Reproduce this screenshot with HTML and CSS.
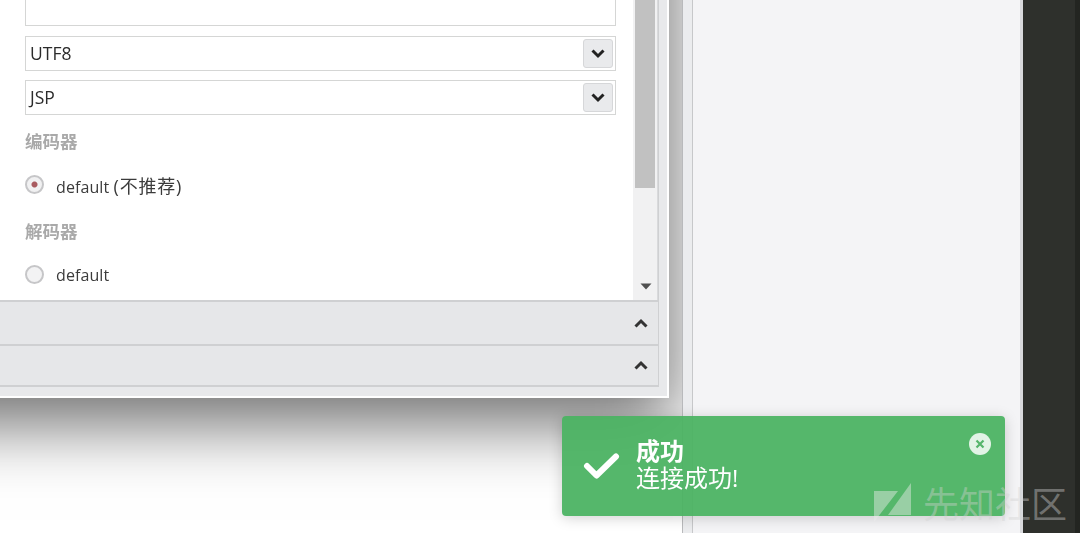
FILE: index.html
```html
<!DOCTYPE html>
<html lang="zh">
<head>
<meta charset="utf-8">
<title>连接成功</title>
<link rel="stylesheet" href="styles.css">
</head>
<body>
<div class="app">
  <main class="canvas">
    <section class="window">
      <div class="window-inner">
        <div class="body">
          <div class="form">
            <div class="field field-blank"></div>
            <div class="field"><span class="field-value">UTF8</span><span class="select-btn"><svg width="16" height="11" viewBox="0 0 16 11"><path d="M2.500 2.500l5.500 5.500 5.500-5.500" fill="none" stroke="#222" stroke-width="3"/></svg></span></div>
            <div class="field"><span class="field-value">JSP</span><span class="select-btn"><svg width="16" height="11" viewBox="0 0 16 11"><path d="M2.500 2.500l5.500 5.500 5.500-5.500" fill="none" stroke="#222" stroke-width="3"/></svg></span></div>
            <div class="label">编码器</div>
            <div class="radio-row"><span class="radio radio-on"></span><span>default <span class="cjk">(不推荐)</span></span></div>
            <div class="label">解码器</div>
            <div class="radio-row"><span class="radio"></span><span>default</span></div>
          </div>
          <div class="scrollbar">
            <div class="thumb"></div>
            <svg class="arrow" width="12" height="7" viewBox="0 0 12 7"><path d="M0.500 0.500h11L6 6.500z" fill="#505050"/></svg>
          </div>
        </div>
        <div class="accordion"><svg width="16" height="11" viewBox="0 0 16 11"><path d="M2.500 8.500l5.500-5.500 5.500 5.500" fill="none" stroke="#333" stroke-width="3"/></svg></div>
        <div class="accordion accordion-last"><svg width="16" height="11" viewBox="0 0 16 11"><path d="M2.500 8.500l5.500-5.500 5.500 5.500" fill="none" stroke="#333" stroke-width="3"/></svg></div>
      </div>
    </section>
  </main>
  <aside class="sidebar"><div class="sidebar-panel"></div></aside>
  <nav class="dock"></nav>
</div>

<div class="toast">
  <svg class="toast-check" width="38" height="30" viewBox="0 0 38 30"><path d="M4 15l9.500 9.500L33 5.500" fill="none" stroke="#fff" stroke-width="6" stroke-linecap="round" stroke-linejoin="round"/></svg>
  <div class="toast-text">
    <div class="toast-title">成功</div>
    <div class="toast-msg">连接成功!</div>
  </div>
  <span class="toast-close"><svg width="10" height="10" viewBox="0 0 10 10"><path d="M1.500 1.500l7 7M8.500 1.500l-7 7" stroke="#55b56b" stroke-width="2.200"/></svg></span>
</div>

<div class="watermark">
  <svg width="40" height="43" viewBox="0 0 40 43"><path d="M1 8h24L1 39zM38 0v32H15z" fill="#ececec"/></svg>
  <span>先知社区</span>
</div>
</body>
</html>
```

FILE: styles.css
```css
* { box-sizing: border-box; }
html, body { margin: 0; height: 100%; overflow: hidden; }
body {
  background: #fff;
  color: #333;
  font-family: "Open Sans", "Noto Sans CJK SC", sans-serif;
  font-size: 16px;
}
.app { display: flex; height: 533px; width: 1080px; filter: blur(.4px); }
.canvas {
  position: relative;
  width: 683px;
  overflow: hidden;
  background: #fff;
  border-right: 1px solid #b9babc;
}
.window {
  position: absolute;
  left: -108px;
  top: -120px;
  width: 777px;
  height: 518px;
  padding: 0 8px 9px 0;
  background: #e8e9eb;
  border: 2px solid #fff;
  border-top: 0;
  border-left: 0;
  box-shadow: 4px 27px 64px rgba(0, 0, 0, .56);
}
.window-inner {
  display: flex;
  flex-direction: column;
  height: 100%;
  border-right: 1px solid #cfd0d2;
  border-bottom: 2px solid #cfd0d2;
}
.body { display: flex; height: 420px; background: #fff; }
.form { flex: 1; padding: 100px 17px 0 133px; min-width: 0; }
.field {
  display: flex;
  align-items: center;
  justify-content: space-between;
  height: 35px;
  margin-bottom: 9px;
  padding: 0 2px 0 4px;
  background: #fff;
  border: 1px solid #d5d6d5;
  color: #2b2b2b;
  font-size: 17.500px;
}
.field-value { margin-top: -2px; }
.field-blank { height: 46px; margin-bottom: 10px; }
.select-btn {
  display: flex;
  align-items: center;
  justify-content: center;
  width: 30px;
  height: 29px;
  background: #e9eaec;
  border: 1px solid #d6d7d9;
  border-radius: 3px;
}
.label {
  height: 22px;
  margin-top: 23px;
  line-height: 22px;
  color: #a9a9a9;
  font-size: 17.500px;
  font-weight: 700;
}
.field + .label { margin-top: 15px; }
.radio-row {
  display: flex;
  align-items: center;
  gap: 12px;
  height: 24px;
  margin-top: 21px;
  color: #3b3b3b;
  letter-spacing: .1px;
}
.cjk { font-size: 18px; letter-spacing: .8px; }
.radio {
  display: block;
  width: 19px;
  height: 19px;
  margin-top: -2px;
  border: 2px solid #c6c6c8;
  border-radius: 50%;
  background: #f3f3f4;
}
.radio-on { background: radial-gradient(circle, #a95b60 0 2.500px, #f1f1f2 3.500px); }
.scrollbar { position: relative; width: 25px; background: #f1f1f2; border-right: 1px solid #d9dadc; }
.thumb { width: 20px; height: 308px; margin-left: 2px; background: #c1c1c1; }
.arrow { position: absolute; left: 7px; bottom: 10px; }
.accordion {
  display: flex;
  align-items: center;
  justify-content: flex-end;
  height: 44px;
  padding: 0 9px 0 0;
  background: #e6e7e9;
  border-top: 2px solid #cfd0d2;
}
.accordion-last { flex: 1; }
.sidebar { width: 340px; background: #f4f4f6; }
.sidebar-panel {
  height: 100%;
  background: #f4f4f6;
  border-left: 9px solid #ebecee;
  border-right: 3px solid #d8d9dc;
  box-shadow: inset 1px 0 0 #c7c8ca;
}
.dock { width: 57px; background: #2e302c; border-right: 5px solid #232521; }
.toast {
  position: absolute;
  left: 562px;
  top: 416px;
  display: flex;
  align-items: center;
  width: 443px;
  height: 100px;
  padding: 0 0 0 21px;
  background: rgba(74, 178, 98, .94);
  border-radius: 4px;
  box-shadow: 0 2px 14px rgba(0, 0, 0, .18);
  color: #fff;
  filter: blur(.3px);
}
.toast-check { flex: none; }
.toast-text { margin-left: 15px; margin-top: -4px; font-size: 24px; line-height: 27px; }
.toast-title { font-weight: 700; }
.toast-close {
  position: absolute;
  right: 14px;
  top: 17px;
  display: flex;
  align-items: center;
  justify-content: center;
  width: 22px;
  height: 22px;
  border-radius: 50%;
  background: #e2f3e6;
}
.watermark {
  position: absolute;
  left: 873px;
  top: 483px;
  display: flex;
  align-items: center;
  gap: 10px;
  height: 43px;
  color: rgba(210, 210, 210, .42);
  font-size: 36px;
  line-height: 43px;
  white-space: nowrap;
}
.watermark svg { opacity: .45; }
```
